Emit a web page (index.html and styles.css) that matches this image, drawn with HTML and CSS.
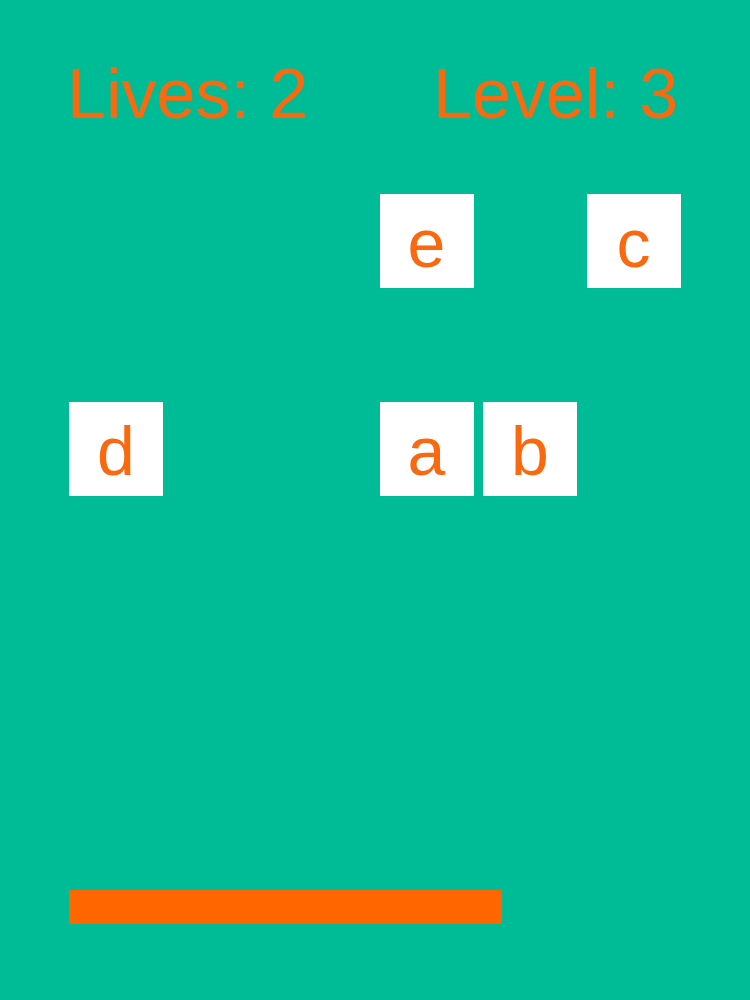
FILE: index.html
```html
<!DOCTYPE html>
<html>
<head>
<meta charset="utf-8">
<link rel="stylesheet" href="styles.css">
</head>
<body>
<div class="game">
  <div class="hud">
    <span class="lives">Lives: 2</span>
    <span class="level">Level: 3</span>
  </div>
  <div class="board">
    <div class="tile c4 r1">e</div>
    <div class="tile c6 r1">c</div>
    <div class="tile c1 r3">d</div>
    <div class="tile c4 r3">a</div>
    <div class="tile c5 r3">b</div>
  </div>
  <div class="paddle"></div>
</div>
</body>
</html>
```
FILE: styles.css
```css
html, body {
  margin: 0;
  padding: 0;
  background: #00bc96;
}
.game {
  width: 750px;
  height: 1000px;
  font-family: "Liberation Sans", Arial, sans-serif;
  color: #f96a10;
}
.hud {
  display: flex;
  padding-top: 54px;
  padding-left: 67px;
  font-size: 70px;
  line-height: 80px;
  height: 80px;
}
.lives {
  width: 366px;
}
.board {
  margin-top: 60px;
  margin-left: 69px;
  display: grid;
  grid-template-columns: repeat(6, 94px);
  grid-template-rows: repeat(3, 94px);
  column-gap: 9.5px;
  row-gap: 10px;
}
.tile {
  background: #ffffff;
  display: flex;
  align-items: center;
  justify-content: center;
  font-size: 68px;
  line-height: 80px;
  padding-top: 4px;
  box-sizing: border-box;
}
.c1 { grid-column: 1; }
.c4 { grid-column: 4; }
.c5 { grid-column: 5; }
.c6 { grid-column: 6; }
.r1 { grid-row: 1; }
.r3 { grid-row: 3; }
.paddle {
  margin-top: 394px;
  margin-left: 69px;
  width: 433px;
  height: 34px;
  background: #ff6600;
}
```
